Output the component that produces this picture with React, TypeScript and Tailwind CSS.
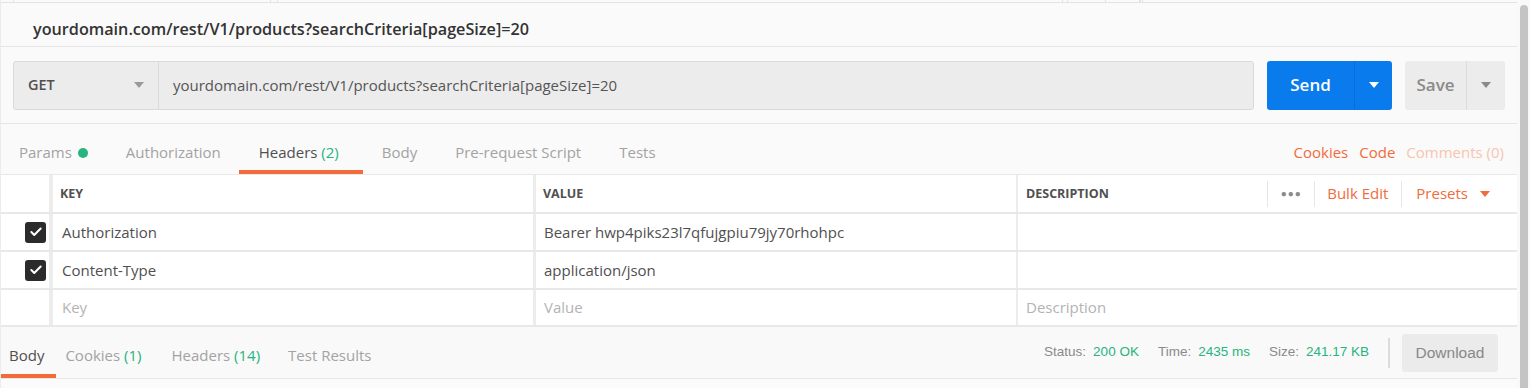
import { Check } from "lucide-react";

const sans = "font-['Open_Sans',sans-serif]";

function Caret({ className = "" }: { className?: string }) {
  return (
    <svg width="10" height="6" viewBox="0 0 10 6" className={className}>
      <path d="M0 0h10L5 6z" fill="currentColor" />
    </svg>
  );
}

function Box() {
  return (
    <div className="w-[21px] h-[21px] rounded-[3px] bg-[#2b2b2b] flex items-center justify-center">
      <Check size={14} strokeWidth={3.5} className="text-white" />
    </div>
  );
}

const rows = [
  { key: "Authorization", value: "Bearer hwp4piks23l7qfujgpiu79jy70rhohpc", on: true },
  { key: "Content-Type", value: "application/json", on: true },
];

export default function App() {
  return (
    <div className={`${sans} w-[1530px] h-[388px] bg-[#fafafa] flex overflow-hidden`}>
      <div className="w-[1517px] flex flex-col border-l border-[#ececec]">
        {/* top strip */}
        <div className="h-[3px] border-b border-[#e3e3e3] flex">
          <div className="w-[13px] border-r border-[#e3e3e3]" />
          <div className="w-[257px] border-r border-[#e3e3e3]" />
          <div className="w-[7px] border-r border-[#e3e3e3]" />
          <div className="w-[785px] border-r border-[#e3e3e3]" />
          <div className="w-[5px] border-r border-[#e3e3e3]" />
          <div className="w-[38px] border-r border-[#e3e3e3]" />
          <div className="w-[35px] border-r-2 border-[#e3e3e3]" />
          <div className="w-[2px] border-r border-[#e3e3e3]" />
        </div>

        {/* title */}
        <div className="h-[44px] border-b border-[#e6e6e6] flex items-center pl-[32px] pt-[9px]">
          <span className="text-[16.2px] font-semibold text-[#333]">
            yourdomain.com/rest/V1/products?searchCriteria[pageSize]=20
          </span>
        </div>

        {/* url bar */}
        <div className="h-[77px] border-b border-[#e6e6e6] flex items-center pl-[12px] pr-[12px]">
          <div className="flex h-[49px] flex-1 rounded-[3px] border border-[#dadada] bg-[#ececec]">
            <div className="w-[145px] flex items-center justify-between pl-[14px] pr-[14px] border-r border-[#dadada]">
              <span className="text-[14.5px] font-semibold text-[#505050]">GET</span>
              <Caret className="text-[#9a9a9a]" />
            </div>
            <div className="flex-1 flex items-center pl-[14px] text-[15px] text-[#555]">
              yourdomain.com/rest/V1/products?searchCriteria[pageSize]=20
            </div>
          </div>
          <div className="flex h-[49px] w-[125px] ml-[13px] rounded-[3px] bg-[#097bed] text-white">
            <div className="w-[87px] flex items-center justify-center text-[17px] font-semibold">Send</div>
            <div className="flex-1 flex items-center justify-center border-l border-[#0a6fd4]">
              <Caret />
            </div>
          </div>
          <div className="flex h-[49px] w-[100px] ml-[13px] rounded-[3px] bg-[#ececec] text-[#8a8a8a]">
            <div className="w-[61px] flex items-center justify-center text-[17px] font-semibold">Save</div>
            <div className="flex-1 flex items-center justify-center border-l border-[#dcdcdc]">
              <Caret className="text-[#8a8a8a]" />
            </div>
          </div>
        </div>

        {/* request tabs */}
        <div className="h-[50px] flex items-stretch text-[15px]">
          <div className="flex items-stretch pl-[18px] gap-[38px] text-[#a3a3a3]">
            <div className="flex items-center gap-[6px] pt-[7px]">
              Params <span className="w-[10px] h-[10px] rounded-full bg-[#26b47f]" />
            </div>
            <div className="flex items-center pt-[7px]">Authorization</div>
            <div className="flex items-center pl-[20px] pr-[24px] -ml-[20px] -mr-[24px] pt-[11px] border-b-[4px] border-[#f26b3a] text-[#505050]">
              Headers&nbsp;<span className="text-[#26b47f]">(2)</span>
            </div>
            <div className="flex items-center pt-[7px] ml-[5px]">Body</div>
            <div className="flex items-center pt-[7px]">Pre-request Script</div>
            <div className="flex items-center pt-[7px]">Tests</div>
          </div>
          <div className="ml-auto flex items-center gap-[11px] pr-[13px] pt-[7px]">
            <span className="text-[#f26b3a]">Cookies</span>
            <span className="text-[#f26b3a]">Code</span>
            <span className="text-[#f8c4ae]">Comments (0)</span>
          </div>
        </div>

        {/* headers table */}
        <div className="border-t border-[#e8e8e8] bg-white">
          <div className="flex h-[39px] border-b-2 border-[#e8e8e8] text-[12.5px] font-bold text-[#505050]">
            <div className="w-[52px] border-r-[4px] border-[#ececec]" />
            <div className="w-[483px] border-r-[3px] border-[#ececec] flex items-center pl-[7px] pt-[2px]">KEY</div>
            <div className="w-[482px] border-r-2 border-[#ececec] flex items-center pl-[7px] pt-[2px]">VALUE</div>
            <div className="flex-1 flex items-center pl-[8px] pr-[27px]">
              <span className="pt-[2px]">DESCRIPTION</span>
              <div className="ml-auto flex items-center h-[26px] text-[15px] font-normal">
                <div className="h-full w-[47px] border-l border-[#e6e6e6] flex items-center justify-center text-[#8a8a8a] tracking-[1px] text-[10px]">
                  ●●●
                </div>
                <div className="h-full border-l border-[#e6e6e6] pl-[12px] pr-[13px] flex items-center text-[#f26b3a]">
                  Bulk Edit
                </div>
                <div className="h-full border-l border-[#e6e6e6] pl-[14px] flex items-center gap-[12px] text-[#f26b3a]">
                  Presets <Caret />
                </div>
              </div>
            </div>
          </div>
          {rows.map((r) => (
            <div key={r.key} className="flex h-[38px] border-b-2 border-[#e8e8e8] text-[15px] text-[#505050]">
              <div className="w-[52px] border-r-[4px] border-[#ececec] flex items-center justify-end pr-[3px]">
                {r.on && <Box />}
              </div>
              <div className="w-[483px] border-r-[3px] border-[#ececec] flex items-center pl-[9px]">{r.key}</div>
              <div className="w-[482px] border-r-2 border-[#ececec] flex items-center pl-[8px]">{r.value}</div>
              <div className="flex-1" />
            </div>
          ))}
          <div className="flex h-[37px] border-b-2 border-[#e8e8e8] text-[15px] text-[#b3b3b3]">
            <div className="w-[52px] border-r-[4px] border-[#ececec]" />
            <div className="w-[483px] border-r-[3px] border-[#ececec] flex items-center pl-[9px]">Key</div>
            <div className="w-[482px] border-r-2 border-[#ececec] flex items-center pl-[8px]">Value</div>
            <div className="flex-1 flex items-center pl-[8px]">Description</div>
          </div>
        </div>

        {/* response bar */}
        <div className="h-[52px] flex items-stretch border-b border-[#e6e6e6] bg-[#f9f9f9]">
          <div className="flex items-stretch text-[15px] text-[#a3a3a3]">
            <div className="flex items-center pl-[8px] pr-[12px] border-b-[4px] border-[#f26b3a] pt-[10px] text-[#505050]">Body</div>
            <div className="flex items-center pl-[9px] pt-[6px]">
              Cookies&nbsp;<span className="text-[#26b47f]">(1)</span>
            </div>
            <div className="flex items-center pl-[30px] pt-[6px]">
              Headers&nbsp;<span className="text-[#26b47f]">(14)</span>
            </div>
            <div className="flex items-center pl-[28px] pt-[6px]">Test Results</div>
          </div>
          <div className="ml-auto flex items-center pr-[19px] font-['Liberation_Sans',Arial,sans-serif] text-[13.5px]">
            <span className="text-[#8a8a8a]">Status:</span>
            <span className="text-[#26b47f] ml-[7px]">200 OK</span>
            <span className="text-[#8a8a8a] ml-[19px]">Time:</span>
            <span className="text-[#26b47f] ml-[7px]">2435 ms</span>
            <span className="text-[#8a8a8a] ml-[19px]">Size:</span>
            <span className="text-[#26b47f] ml-[7px]">241.17 KB</span>
            <div className="w-[2px] h-[30px] bg-[#dcdcdc] ml-[19px] mr-[12px]" />
            <div className="h-[38px] w-[96px] rounded-[3px] bg-[#ebebeb] flex items-center justify-center text-[15.5px] text-[#888]">
              Download
            </div>
          </div>
        </div>
        <div className="flex-1 bg-[#fbfbfb]" />
      </div>
      {/* scrollbar */}
      <div className="flex-1 flex justify-start pl-[3px] pt-[5px] bg-[#f9f9f9]">
        <div className="w-[8px] h-full rounded-t-[4px] bg-[#c4c4c4]" />
      </div>
    </div>
  );
}
